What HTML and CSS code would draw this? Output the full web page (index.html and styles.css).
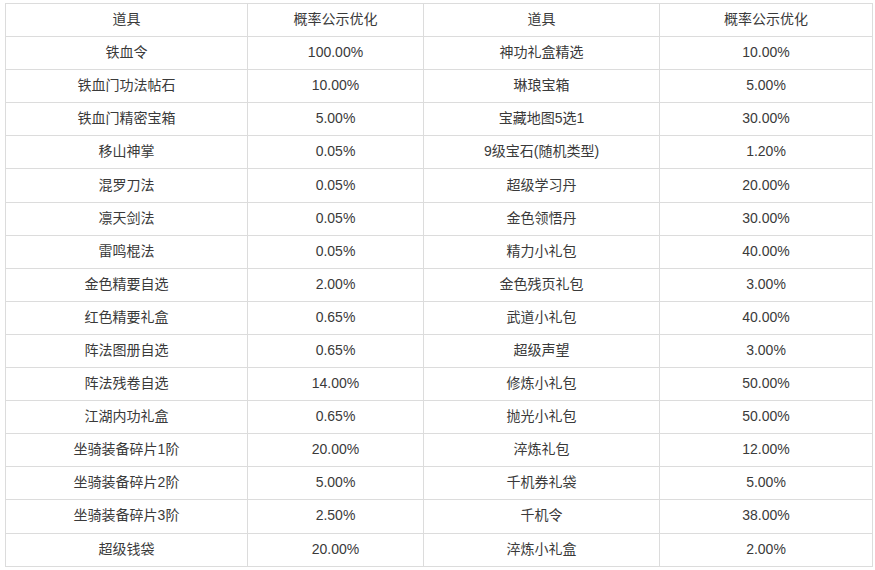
FILE: index.html
```html
<!DOCTYPE html>
<html lang="zh">
<head>
<meta charset="utf-8">
<link rel="stylesheet" href="styles.css">
</head>
<body>
<table class="prob">
<colgroup><col class="c1"><col class="c2"><col class="c3"><col class="c4"></colgroup>
<tr><td>道具</td><td>概率公示优化</td><td>道具</td><td>概率公示优化</td></tr>
<tr><td>铁血令</td><td>100.00%</td><td>神功礼盒精选</td><td>10.00%</td></tr>
<tr><td>铁血门功法帖石</td><td>10.00%</td><td>琳琅宝箱</td><td>5.00%</td></tr>
<tr><td>铁血门精密宝箱</td><td>5.00%</td><td>宝藏地图5选1</td><td>30.00%</td></tr>
<tr><td>移山神掌</td><td>0.05%</td><td>9级宝石(随机类型)</td><td>1.20%</td></tr>
<tr><td>混罗刀法</td><td>0.05%</td><td>超级学习丹</td><td>20.00%</td></tr>
<tr><td>凛天剑法</td><td>0.05%</td><td>金色领悟丹</td><td>30.00%</td></tr>
<tr><td>雷鸣棍法</td><td>0.05%</td><td>精力小礼包</td><td>40.00%</td></tr>
<tr><td>金色精要自选</td><td>2.00%</td><td>金色残页礼包</td><td>3.00%</td></tr>
<tr><td>红色精要礼盒</td><td>0.65%</td><td>武道小礼包</td><td>40.00%</td></tr>
<tr><td>阵法图册自选</td><td>0.65%</td><td>超级声望</td><td>3.00%</td></tr>
<tr><td>阵法残卷自选</td><td>14.00%</td><td>修炼小礼包</td><td>50.00%</td></tr>
<tr><td>江湖内功礼盒</td><td>0.65%</td><td>抛光小礼包</td><td>50.00%</td></tr>
<tr><td>坐骑装备碎片1阶</td><td>20.00%</td><td>淬炼礼包</td><td>12.00%</td></tr>
<tr><td>坐骑装备碎片2阶</td><td>5.00%</td><td>千机券礼袋</td><td>5.00%</td></tr>
<tr><td>坐骑装备碎片3阶</td><td>2.50%</td><td>千机令</td><td>38.00%</td></tr>
<tr><td>超级钱袋</td><td>20.00%</td><td>淬炼小礼盒</td><td>2.00%</td></tr>
</table>
</body>
</html>
```

FILE: styles.css
```css
html, body {
  margin: 0;
  padding: 0;
  background: #fff;
}
body {
  padding: 3px 0 0 5px;
  font-family: "Liberation Sans", "Noto Sans CJK SC", sans-serif;
  font-size: 14px;
  color: #3a3a3a;
}
.prob {
  border-collapse: collapse;
  table-layout: fixed;
  width: 867px;
}
.prob .c1 { width: 242px; }
.prob .c2 { width: 176px; }
.prob .c3 { width: 236px; }
.prob .c4 { width: 213px; }
.prob tr { height: 33.1px; }
.prob td {
  border: 1px solid #dcdcdc;
  text-align: center;
  vertical-align: middle;
  padding: 0 0 2px;
  line-height: 20px;
}
```
